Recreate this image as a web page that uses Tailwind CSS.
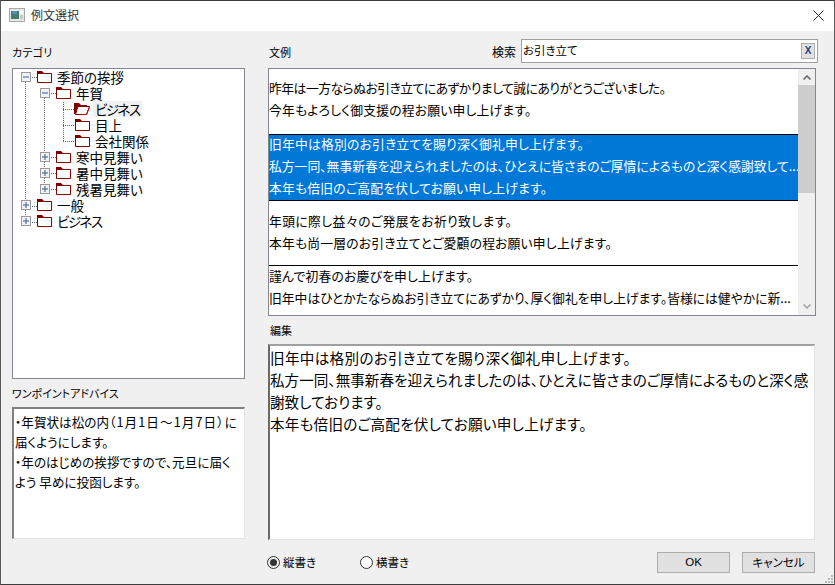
<!DOCTYPE html>
<html lang="ja">
<head>
<meta charset="utf-8">
<script src="https://cdn.jsdelivr.net/npm/@tailwindcss/browser@4"></script>
<title>例文選択</title>
</head>
<body class="bg-[#f0f0f0]">
<svg class="hidden">
<defs>
<symbol id="fo" viewBox="0 0 15 12"><path d="M0.5 2.5H14.5V11.5H0.5Z" fill="#fff" stroke="#800000"/><path d="M0 0H5L7 2V3H0Z" fill="#800000"/></symbol>
<symbol id="op" viewBox="0 0 16 12"><path d="M0 0H5L7 2H13V3.5H4L1.5 11H0Z" fill="#800000"/><path d="M4 3.5H15.5L12.5 11.5H1.5Z" fill="#fff" stroke="#800000"/><path d="M15.5 4L12.5 11.5H8" fill="none" stroke="#e00000"/></symbol>
<symbol id="pl" viewBox="0 0 10 10"><rect x="0.5" y="0.5" width="9" height="9" fill="#f0f2f5" stroke="#9a9a9a"/><path d="M2 5H8M5 2V8" stroke="#3b5a9c"/></symbol>
<symbol id="mi" viewBox="0 0 10 10"><rect x="0.5" y="0.5" width="9" height="9" fill="#f0f2f5" stroke="#9a9a9a"/><path d="M2 5H8" stroke="#3b5a9c"/></symbol>
</defs>
</svg>
<div class="w-[835px] h-[585px] overflow-hidden flex flex-col border border-[#5a5a5a] border-t-[#3c3c3c] border-b-[#3c3c3c] [font-family:'Noto_Sans_CJK_JP',sans-serif] [font-feature-settings:'palt'] text-black bg-[#f0f0f0] relative">
  <div class="h-[30px] pb-[2px] bg-white flex items-center shrink-0">
    <svg class="ml-[8px] w-[16px] h-[14px]" viewBox="0 0 16 14"><rect x="0.5" y="0.5" width="15" height="13" fill="#e8e8e8" stroke="#a8a8a8"/><rect x="2" y="3" width="8" height="8" fill="#3f7f6f"/><rect x="3" y="3" width="5" height="3" fill="#5a8fb0"/><rect x="11" y="3" width="3" height="3" fill="#ffffff"/><rect x="11" y="7" width="3" height="4" fill="#c8c8c8"/></svg>
    <span class="ml-[6px] text-[12px] text-[#333]">例文選択</span>
    <svg class="ml-auto mr-[10px] w-[11px] h-[11px]" viewBox="0 0 11 11"><path d="M0.5 0.5L10.5 10.5M10.5 0.5L0.5 10.5" stroke="#222" fill="none"/></svg>
  </div>
  <div class="flex flex-1 min-h-0">
    <div class="ml-[11px] w-[233px] shrink-0 flex flex-col">
      <div class="h-[37px] flex items-end pb-[9px] text-[11px] leading-[14px] tracking-[0.3px]">カテゴリ</div>
      <div class="relative h-[311px] border border-[#828790] bg-white pt-0 text-[13.5px] leading-[16px]">
        <svg class="absolute left-0 top-0 w-[231px] h-[170px] pointer-events-none" viewBox="0 0 231 170" fill="none" stroke="#666" stroke-dasharray="1 1">
          <path d="M12.5 13V153M17 8.5H24M31.5 29V120M36 24.5H43M36 88.5H43M36 104.5H43M36 120.5H43M50.5 33V72.5M50 40.5H62M50 56.5H62M50 72.5H62M17 137.5H24M17 153.5H24"/>
        </svg>
        <div class="relative flex h-[16px] items-center pl-[8px]"><svg class="w-[10px] h-[10px]"><use href="#mi"/></svg><svg class="ml-[6px] w-[15px] h-[12px]"><use href="#fo"/></svg><span class="ml-[5px] -mt-[1px]">季節の挨拶</span></div>
        <div class="relative flex h-[16px] items-center pl-[27px]"><svg class="w-[10px] h-[10px]"><use href="#mi"/></svg><svg class="ml-[6px] w-[15px] h-[12px]"><use href="#fo"/></svg><span class="ml-[5px] -mt-[1px]">年賀</span></div>
        <div class="relative flex h-[16px] items-center pl-[61px]"><svg class="w-[16px] h-[12px]"><use href="#op"/></svg><span class="ml-[3px] px-[2px] bg-[#f0f0f0] tracking-[-1.5px]">ビジネス</span></div>
        <div class="relative flex h-[16px] items-center pl-[62px]"><svg class="w-[15px] h-[12px]"><use href="#fo"/></svg><span class="ml-[5px] -mt-[1px]">目上</span></div>
        <div class="relative flex h-[16px] items-center pl-[62px]"><svg class="w-[15px] h-[12px]"><use href="#fo"/></svg><span class="ml-[5px] -mt-[1px]">会社関係</span></div>
        <div class="relative flex h-[16px] items-center pl-[27px]"><svg class="w-[10px] h-[10px]"><use href="#pl"/></svg><svg class="ml-[6px] w-[15px] h-[12px]"><use href="#fo"/></svg><span class="ml-[5px] -mt-[1px]">寒中見舞い</span></div>
        <div class="relative flex h-[16px] items-center pl-[27px]"><svg class="w-[10px] h-[10px]"><use href="#pl"/></svg><svg class="ml-[6px] w-[15px] h-[12px]"><use href="#fo"/></svg><span class="ml-[5px] -mt-[1px]">暑中見舞い</span></div>
        <div class="relative flex h-[16px] items-center pl-[27px]"><svg class="w-[10px] h-[10px]"><use href="#pl"/></svg><svg class="ml-[6px] w-[15px] h-[12px]"><use href="#fo"/></svg><span class="ml-[5px] -mt-[1px]">残暑見舞い</span></div>
        <div class="relative flex h-[16px] items-center pl-[8px]"><svg class="w-[10px] h-[10px]"><use href="#pl"/></svg><svg class="ml-[6px] w-[15px] h-[12px]"><use href="#fo"/></svg><span class="ml-[5px] -mt-[1px]">一般</span></div>
        <div class="relative flex h-[16px] items-center pl-[8px]"><svg class="w-[10px] h-[10px]"><use href="#pl"/></svg><svg class="ml-[6px] w-[15px] h-[12px]"><use href="#fo"/></svg><span class="ml-[5px] -mt-[1px] tracking-[-1.5px]">ビジネス</span></div>
      </div>
      <div class="h-[28px] flex items-end pb-[7px] text-[11px] leading-[14px]">ワンポイントアドバイス</div>
      <div class="h-[132px] border border-t-[#808080] border-l-[#808080] border-r-[#e3e3e3] border-b-[#e3e3e3] border-l-2 border-t-2 bg-white pl-[1px] pt-[3px] text-[12.6px] leading-[20px]">
        ・年賀状は松の内<span class="tracking-[1.1px]">（1月1日～1月7日）</span>に<br>届くようにします。<br>・年のはじめの挨拶ですので、元旦に届く<br>よう 早めに投函します。
      </div>
    </div>
    <div class="ml-[23px] w-[548px] shrink-0 flex flex-col">
      <div class="h-[37px] flex items-end pb-[5px] relative">
        <span class="text-[11px] leading-[14px] mb-[4px] ml-[1px]">文例</span>
        <span class="ml-auto text-[12px] leading-[14px] mb-[4px] mr-[5px]">検索</span>
        <div class="w-[297px] h-[24px] border border-[#a0a0a0] bg-white flex items-center pl-[1px] pr-[2px] mr-[-2px] text-[11.5px]">
          <span>お引き立て</span>
          <span class="ml-auto w-[14px] h-[16px] border border-[#adadad] bg-[#e1e1e1] flex items-center justify-center text-[10px] text-[#1f3f7f] leading-none [font-family:'Liberation_Sans',sans-serif] font-bold">X</span>
        </div>
      </div>
      <div class="h-[248px] border border-[#828790] bg-white flex overflow-hidden">
        <div class="flex-1 min-w-0 text-[12.8px] leading-[22px] whitespace-nowrap overflow-hidden tracking-[0.2px]">
          <div class="h-[65px] pt-[8px]"><div class="tracking-[-0.5px]">昨年は一方ならぬお引き立てにあずかりまして誠にありがとうございました。</div><div>今年もよろしく御支援の程お願い申し上げます。</div></div>
          <div class="h-[67px] bg-[#0078d7] text-white border-y border-black"><div class="-mt-[2px]">旧年中は格別のお引き立てを賜り深く御礼申し上げます。</div><div class="tracking-[0px]">私方一同、無事新春を迎えられましたのは、ひとえに皆さまのご厚情によるものと深く感謝致して...</div><div>本年も倍旧のご高配を伏してお願い申し上げます。</div></div>
          <div class="h-[65px] pt-[9px] border-b border-black"><div class="tracking-[0.4px]">年頭に際し益々のご発展をお祈り致します。</div><div>本年も尚一層のお引き立てとご愛顧の程お願い申し上げます。</div></div>
          <div class="-mt-[1px]"><div>謹んで初春のお慶びを申し上げます。</div><div class="tracking-[0px]">旧年中はひとかたならぬお引き立てにあずかり、厚く御礼を申し上げます。皆様には健やかに新...</div></div>
        </div>
        <div class="w-[17px] shrink-0 bg-[#f0f0f0] flex flex-col items-center">
          <div class="h-[16px] flex items-center justify-center w-full"><svg class="w-[8px] h-[5px]" viewBox="0 0 8 5"><path d="M0.5 4.5L4 1L7.5 4.5" fill="none" stroke="#606060" stroke-width="1.5"/></svg></div>
          <div class="h-[108px] w-full bg-[#cdcdcd]"></div>
          <div class="mt-auto h-[16px] mb-[1px] flex items-center justify-center w-full"><svg class="w-[8px] h-[5px]" viewBox="0 0 8 5"><path d="M0.5 0.5L4 4L7.5 0.5" fill="none" stroke="#a0a0a0" stroke-width="1.5"/></svg></div>
        </div>
      </div>
      <div class="h-[28px] flex items-end pb-[7px] pl-[2px] text-[11px] leading-[14px]">編集</div>
      <div class="h-[196px] w-[547px] border border-t-2 border-l-2 border-t-[#a0a0a0] border-l-[#696969] border-r-[#e3e3e3] border-b-[#e3e3e3] bg-white text-[14.6px] leading-[22px] pt-[1px] pl-0">
        <div class="tracking-[0.3px]">旧年中は格別のお引き立てを賜り深く御礼申し上げます。</div><div>私方一同、無事新春を迎えられましたのは、ひとえに皆さまのご厚情によるものと深く感</div><div>謝致しております。</div><div class="tracking-[0.2px]">本年も倍旧のご高配を伏してお願い申し上げます。</div>
      </div>
      <div class="flex-1 flex items-start pt-[12px] text-[11.5px]">
        <div class="flex items-center h-[21px]">
          <span class="-ml-[1px] w-[13px] h-[13px] rounded-full border border-[#333] flex items-center justify-center"><span class="w-[7px] h-[7px] rounded-full bg-[#333]"></span></span>
          <span class="ml-[3px]">縦書き</span>
          <span class="ml-[44px] w-[13px] h-[13px] rounded-full border border-[#333] bg-white"></span>
          <span class="ml-[3px]">横書き</span>
        </div>
        <button class="ml-auto w-[73px] h-[21px] border border-[#adadad] bg-[#e1e1e1] text-[11.5px] leading-none [font-family:'Liberation_Sans',sans-serif]">OK</button>
        <button class="ml-[12px] mr-[1px] w-[73px] h-[21px] border border-[#adadad] bg-[#e1e1e1] text-[11.5px] leading-none">キャンセル</button>
      </div>
    </div>
  </div>
  <svg class="absolute right-0 bottom-0 w-[10px] h-[10px]" viewBox="0 0 10 10" fill="#b8b8b8"><rect x="7" y="1" width="2" height="2"/><rect x="4" y="4" width="2" height="2"/><rect x="7" y="4" width="2" height="2"/><rect x="1" y="7" width="2" height="2"/><rect x="4" y="7" width="2" height="2"/><rect x="7" y="7" width="2" height="2"/></svg>
</div>
</body>
</html>
